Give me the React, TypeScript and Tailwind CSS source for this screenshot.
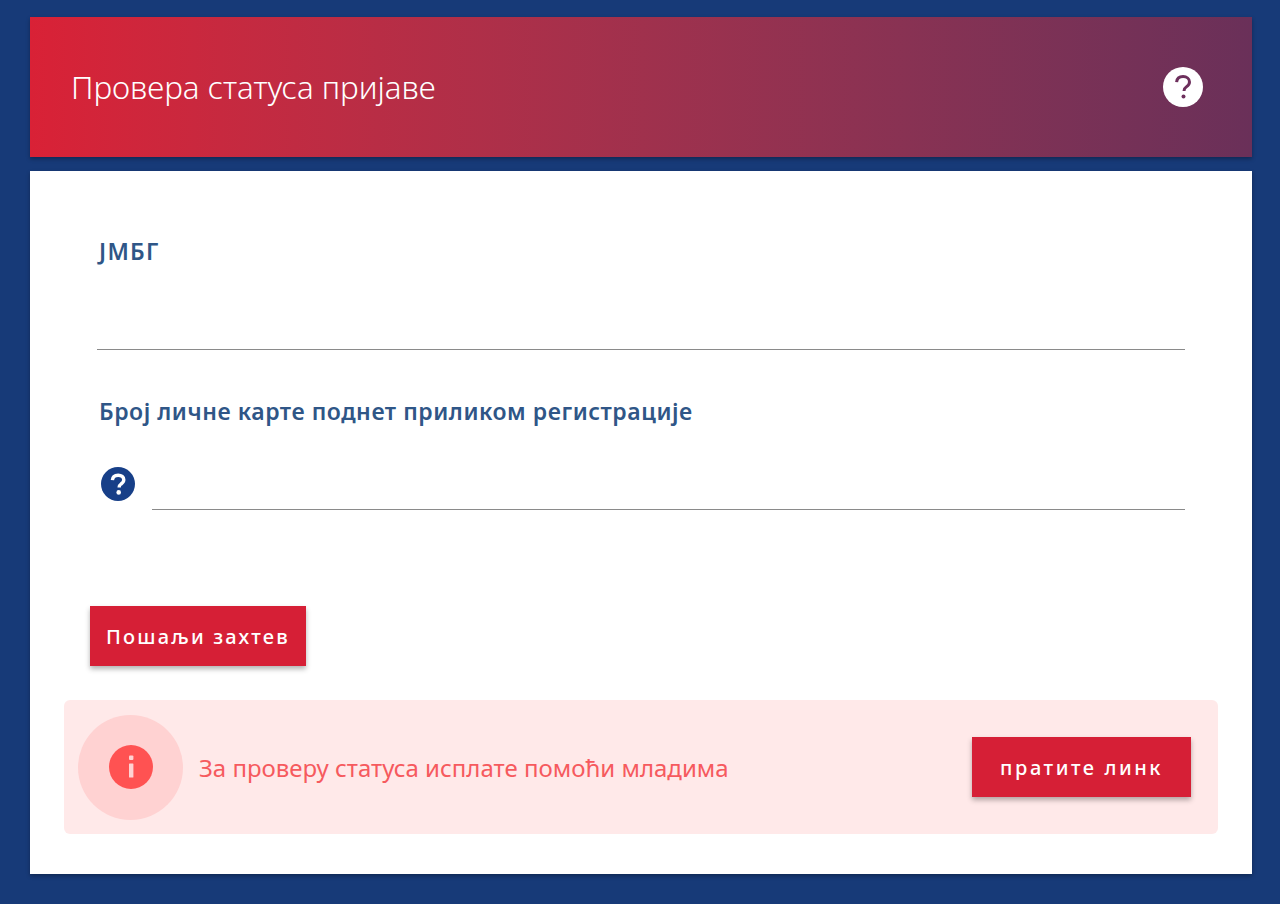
export default function App() {
  return (
    <div className="min-h-[904px] bg-[#173a78] pb-[30px] pl-[30px] pr-[28px] pt-[17px] font-['Noto_Sans',sans-serif]">
      <header className="flex h-[140px] items-center justify-between bg-gradient-to-r from-[#d92136] to-[#6a3059] pl-[41px] pr-[49px] shadow-[0_2px_4px_rgba(0,0,0,0.3)]">
        <h1 className="text-[31.4px] font-light leading-none text-white">Провера статуса пријаве</h1>
        <svg width="40" height="40" viewBox="0 0 40 40" aria-hidden="true">
          <circle cx="20" cy="20" r="20" fill="#ffffff" />
          <path d="M13.6 15.2c.3-3.6 3-5.6 6.5-5.6 3.6 0 6.4 2.1 6.4 5.3 0 2.6-1.6 3.8-3.2 5-1.4 1-2.2 1.7-2.2 3.5v.7" fill="none" stroke="#6d2f5c" strokeWidth="3" />
          <circle cx="20.5" cy="29.6" r="2" fill="#6d2f5c" />
        </svg>
      </header>
      <main className="mt-[14px] h-[703px] bg-white px-[34px] pt-[68px] shadow-[0_2px_4px_rgba(0,0,0,0.3)]">
        <div className="px-[33px]">
          <label className="block pl-[2px] text-[23px] font-semibold leading-6 tracking-[1.3px] text-[#2f5687]">ЈМБГ</label>
          <div className="mt-[86px] h-px bg-[#8a8a8a]" />
          <label className="mt-[49px] block pl-[2px] text-[23px] font-semibold leading-6 tracking-[0.55px] text-[#2f5687]">Број личне карте поднет приликом регистрације</label>
          <div className="mt-[44px] flex items-end">
            <svg className="mb-[9px] ml-[4px] mr-[17px] shrink-0" width="34" height="34" viewBox="0 0 34 34" aria-hidden="true">
              <circle cx="17" cy="17" r="17" fill="#173f88" />
              <path d="M11.4 13.2c.2-3.2 2.6-5 5.8-5 3.2 0 5.6 1.8 5.6 4.6 0 2.2-1.4 3.3-2.7 4.2-1.2.9-1.9 1.5-1.9 3v.6" fill="none" stroke="#ffffff" strokeWidth="3.4" />
              <circle cx="17.7" cy="25.4" r="2.3" fill="#ffffff" />
            </svg>
            <div className="h-px flex-1 bg-[#8a8a8a]" />
          </div>
        </div>
        <button className="ml-[26px] mt-[96px] flex h-[60px] w-[216px] items-center justify-center bg-[#d61f36] pt-[2px] text-[20px] font-medium tracking-[2.2px] text-white shadow-[0_3px_5px_rgba(0,0,0,0.3)]">Пошаљи захтев</button>
        <div className="mt-[34px] flex h-[134px] items-center rounded-[6px] bg-[#ffe9e9] pl-[14px] pr-[27px]">
          <div className="flex h-[105px] w-[105px] shrink-0 items-center justify-center rounded-full bg-[#ffd2d2]">
            <svg width="44" height="44" viewBox="0 0 44 44" aria-hidden="true">
              <circle cx="22" cy="22" r="22" fill="#ff5252" />
              <rect x="20" y="10.5" width="4.4" height="4.6" rx="1" fill="#ffd2d2" />
              <rect x="20" y="18.5" width="4.4" height="14" rx="0.6" fill="#ffd2d2" />
            </svg>
          </div>
          <p className="ml-[16px] flex-1 pt-[2px] text-[24px] leading-none text-[#f65a5e]">За проверу статуса исплате помоћи младима</p>
          <button className="flex h-[60px] w-[219px] shrink-0 items-center justify-center bg-[#d61f36] pt-[2px] text-[20px] font-medium tracking-[2.55px] text-white shadow-[0_3px_5px_rgba(0,0,0,0.3)]">пратите линк</button>
        </div>
      </main>
    </div>
  );
}
